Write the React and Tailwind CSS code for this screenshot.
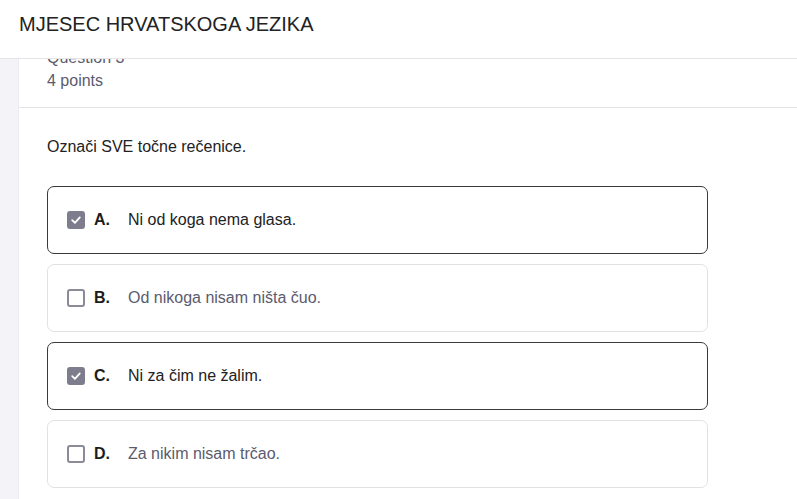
import React from "react";

const options = [
  { letter: "A.", text: "Ni od koga nema glasa.", checked: true },
  { letter: "B.", text: "Od nikoga nisam ništa čuo.", checked: false },
  { letter: "C.", text: "Ni za čim ne žalim.", checked: true },
  { letter: "D.", text: "Za nikim nisam trčao.", checked: false },
];

function Checkbox({ checked }) {
  if (checked) {
    return (
      <span className="flex items-center justify-center w-[18px] h-[18px] rounded-[3px] bg-[#7d7d8e] shrink-0">
        <svg width="12" height="12" viewBox="0 0 12 12" fill="none">
          <path d="M2.2 6.2 L4.9 8.8 L9.8 3.4" stroke="white" strokeWidth="1.8" strokeLinecap="round" strokeLinejoin="round" />
        </svg>
      </span>
    );
  }
  return <span className="w-[18px] h-[18px] rounded-[3px] border-2 border-[#8b8b98] bg-white shrink-0" />;
}

export default function App() {
  return (
    <div className="w-[797px] h-[499px] overflow-hidden bg-[#f4f4f8] font-['Liberation_Sans',Arial,sans-serif] flex flex-col">
      <header className="h-[59px] shrink-0 bg-white border-b border-[#e4e4e6] pl-[19px] pt-[12px] text-[20px] leading-[24px] text-[#222222] z-10">
        MJESEC HRVATSKOGA JEZIKA
      </header>
      <div className="flex-1 ml-[18px] bg-white border-l border-[#ececf0] flex flex-col">
        <div className="h-[49px] border-b border-[#e4e4e6] pl-[28px] relative">
          <div className="absolute left-[28px] top-[-13px] text-[16px] text-[#5b5b6e]">Question 3</div>
          <div className="pt-[10px] text-[16px] text-[#5b5b6e]">4 points</div>
        </div>
        <div className="pl-[28px] pr-[89px] pt-[29px]">
          <p className="text-[16px] text-[#222222] leading-[20px]">Označi SVE točne rečenice.</p>
          <div className="mt-[29px] flex flex-col gap-[10px]">
            {options.map((o) => (
              <div
                key={o.letter}
                className={`h-[68px] rounded-[7px] border flex items-center pl-[19px] ${
                  o.checked ? "border-[#3a3a3a]" : "border-[#e2e2e6]"
                }`}
              >
                <Checkbox checked={o.checked} />
                <span className="ml-[9px] w-[34px] font-bold text-[16px] text-[#1c1c1c]">{o.letter}</span>
                <span className={`text-[16px] ${o.checked ? "text-[#222222]" : "text-[#5b5b6e]"}`}>{o.text}</span>
              </div>
            ))}
          </div>
        </div>
      </div>
    </div>
  );
}
